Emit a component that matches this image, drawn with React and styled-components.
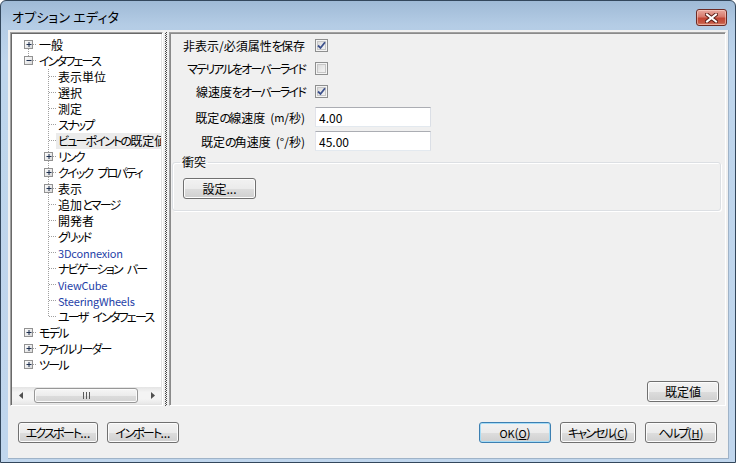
import styled, { createGlobalStyle } from 'styled-components'

const GlobalStyle = createGlobalStyle`
    html, body {
        margin: 0;
        padding: 0;
        background: #ffffff;
    }

    body {
        font-family: "Noto Sans CJK JP", "Noto Sans", sans-serif;
        font-size: 12px;
        font-feature-settings: "palt";
        color: #000;
    }

    * {
        box-sizing: border-box;
    }
`

const Window = styled.div`
    width: 736px;
    height: 463px;
    display: flex;
    flex-direction: column;
    border: 1px solid #33475c;
    border-radius: 6px 6px 0 0;
    background: linear-gradient(180deg, #9fbad6 0px, #b4cce5 24px, #bed5ec 60px, #c0d6ed 100%);
    overflow: hidden;
`

const TitleBar = styled.div`
    height: 29px;
    flex: none;
    display: flex;
    align-items: flex-start;
    justify-content: space-between;
    padding: 0 8px 0 11px;

    & > span {
        font-size: 13px;
        line-height: 15px;
        margin-top: 8px;
        letter-spacing: 0.2px;
    }
`

const CloseButton = styled.div`
    width: 31px;
    height: 17px;
    margin-top: 8px;
    border: 1px solid #6e2b24;
    border-radius: 3px;
    background: linear-gradient(180deg, #e9a99f 0%, #d77a6d 45%, #c24635 55%, #c65844 85%, #d98b74 100%);
    box-shadow: inset 0 0 0 1px rgba(255, 220, 210, 0.5);
    display: flex;
    align-items: center;
    justify-content: center;
`

const Client = styled.div`
    flex: 1;
    display: flex;
    flex-direction: column;
    margin: 0 6px 3px 7px;
    background: #f0f0f0;
    border: 1px solid #9fb3c8;
    border-width: 0 1px 1px 0;
`

const Main = styled.div`
    height: 376px;
    display: flex;
    padding: 2px 2px 0 2px;
`

const TreePanel = styled.div`
    width: 153px;
    display: flex;
    flex-direction: column;
    background: #ffffff;
    border: 1px solid;
    border-color: #a0a0a0 #ffffff #ffffff #a0a0a0;
    box-shadow: inset 1px 1px 0 #696969, inset -1px -1px 0 #e3e3e3;
    padding: 1px;
`

const TreeList = styled.div`
    flex: 1;
    overflow: hidden;
    padding-top: 3px;
`

const TreeRow = styled.div`
    height: 16px;
    display: flex;
    align-items: center;
    white-space: nowrap;

    & > svg {
        flex: none;
    }
`

const TreeLabel = styled.span`
    padding: 0 2px;
    line-height: 16px;
    height: 16px;
    flex: ${p => (p.$selected ? '1' : 'none')};
    background: ${p => (p.$selected ? '#ebebeb' : 'transparent')};
    color: ${p => (p.$blue ? '#1f3fa8' : '#000')};
`

// MS UI Gothic has narrow kana and latin; squeeze those runs
const Kana = styled.span`
    letter-spacing: -1.8px;
`

const Latin = styled.span`
    font-size: 11px;
    letter-spacing: -0.2px;
`

const Gap = styled.span`
    display: inline-block;
    width: 5px;
`

const Scrollbar = styled.div`
    height: 17px;
    flex: none;
    display: flex;
    align-items: center;
    background: linear-gradient(180deg, #e4e4e4, #f4f4f4 30%, #f4f4f4 70%, #e8e8e8);
`

const ScrollArrow = styled.div`
    width: 17px;
    height: 17px;
    display: flex;
    align-items: center;
    justify-content: center;
`

const ScrollTrack = styled.div`
    flex: 1;
    height: 17px;
    display: flex;
    align-items: center;
`

const ScrollThumb = styled.div`
    width: 104px;
    height: 15px;
    margin-left: ${p => p.$offset}px;
    border: 1px solid #979797;
    border-radius: 3px;
    background: linear-gradient(180deg, #f6f6f6 0%, #ececec 50%, #dcdcdc 51%, #d4d4d4 100%);
    box-shadow: inset 0 0 0 1px #fbfbfb;
    display: flex;
    align-items: center;
    justify-content: center;
`

const Splitter = styled.div`
    width: 2px;
    margin: 0 2px;
    background-image: repeating-conic-gradient(#4a4a4a 0% 25%, #f0f0f0 0% 50%);
    background-size: 2px 2px;
`

const RightPanel = styled.div`
    flex: 1;
    display: flex;
    flex-direction: column;
    border: 1px solid;
    border-color: #a0a0a0 #ffffff #ffffff #a0a0a0;
    box-shadow: inset 1px 1px 0 #8a8a8a;
    padding: 1px 4px 3px 2px;
`

const Form = styled.div`
    display: grid;
    grid-template-columns: 133px auto;
    column-gap: 10px;
    align-items: center;
`

const FormLabel = styled.div`
    height: ${p => p.$h}px;
    margin-top: ${p => p.$top || 0}px;
    display: flex;
    align-items: center;
    justify-content: flex-end;
    white-space: nowrap;
`

const FormCell = styled.div`
    height: ${p => p.$h}px;
    margin-top: ${p => p.$top || 0}px;
    display: flex;
    align-items: center;
`

const Box = styled.span`
    width: 13px;
    height: 13px;
    border: 1px solid #8e8f8f;
    background: linear-gradient(135deg, #d5d5d5 0%, #ececec 60%, #f6f6f6 100%);
    box-shadow: inset 0 0 0 1px #f4f4f4, inset 0 0 0 2px #c7c7c7;
    display: flex;
    align-items: center;
    justify-content: center;
`

const TextInput = styled.input`
    width: 116px;
    height: 20px;
    border: 1px solid;
    border-color: #abadb3 #dbdfe6 #e3e9ef #e2e3ea;
    background: #ffffff;
    padding: 0 3px;
    font: inherit;
    font-size: 12px;
    color: #000;
    outline: none;
`

const Group = styled.fieldset`
    margin: 2px 0 0 0;
    padding: 9px 8px 11px 10px;
    border: 1px solid #dcdfe3;
    border-radius: 3px;
    box-shadow: inset 1px 1px 0 #ffffff, 1px 1px 0 #ffffff;

    & > legend {
        padding: 0 2px;
        margin-left: -3px;
        line-height: 14px;
    }
`

const Button = styled.button`
    width: ${p => p.$w || 72}px;
    height: 21px;
    padding: 0;
    font: inherit;
    font-size: 12px;
    line-height: 17px;
    color: #000;
    white-space: nowrap;
    border: 1px solid ${p => (p.$default ? '#3c7fb1' : '#707070')};
    border-radius: 3px;
    background: linear-gradient(180deg, #f2f2f2 0%, #ebebeb 50%, #dddddd 51%, #cfcfcf 100%);
    box-shadow: inset 0 0 0 1px ${p => (p.$default ? '#a6dcf6' : '#fcfcfc')};

    & u {
        text-underline-offset: 1px;
    }
`

const PanelFooter = styled.div`
    margin-top: auto;
    display: flex;
    justify-content: flex-end;
    padding-right: 2px;
`

const BottomBar = styled.div`
    flex: 1;
    display: flex;
    justify-content: space-between;
    align-items: flex-start;
    padding: 16px 11px 0 10px;
`

const ButtonGroup = styled.div`
    display: flex;
    gap: ${p => p.$gap || 9}px;
`

function Jp({ text }) {
    const parts = text.split(/([\u3040-\u30FF]+|[A-Za-z0-9]+| )/)
    return parts.map((p, i) => {
        if (!p) return null
        if (p === ' ') return <Gap key={i} />
        if (/[\u3040-\u30FF]/.test(p)) return <Kana key={i}>{p}</Kana>
        if (/[A-Za-z0-9]/.test(p)) return <Latin key={i}>{p}</Latin>
        return p
    })
}

const treeItems = [
    { label: '一般', level: 0, exp: 'plus', down: true },
    { label: 'インタフェース', level: 0, exp: 'minus', up: true },
    { label: '表示単位', level: 1 },
    { label: '選択', level: 1 },
    { label: '測定', level: 1 },
    { label: 'スナップ', level: 1 },
    { label: 'ビューポイントの既定値', level: 1, selected: true },
    { label: 'リンク', level: 1, exp: 'plus' },
    { label: 'クイック プロパティ', level: 1, exp: 'plus' },
    { label: '表示', level: 1, exp: 'plus' },
    { label: '追加とマージ', level: 1 },
    { label: '開発者', level: 1 },
    { label: 'グリッド', level: 1 },
    { label: '3Dconnexion', level: 1, blue: true },
    { label: 'ナビゲーション バー', level: 1 },
    { label: 'ViewCube', level: 1, blue: true },
    { label: 'SteeringWheels', level: 1, blue: true },
    { label: 'ユーザ インタフェース', level: 1, last: true },
    { label: 'モデル', level: 0, exp: 'plus' },
    { label: 'ファイルリーダー', level: 0, exp: 'plus' },
    { label: 'ツール', level: 0, exp: 'plus' },
]

const DOT = { stroke: '#a0a0a0', strokeWidth: 1, strokeDasharray: '1 1' }

// expander box centred on cx
function Expander({ cx, type }) {
    return (
        <g>
            <defs>
                <linearGradient id="expg" x1="0" y1="0" x2="1" y2="1">
                    <stop offset="0" stopColor="#ffffff" />
                    <stop offset="1" stopColor="#d9d9d9" />
                </linearGradient>
            </defs>
            <rect x={cx - 4} y={3.5} width={8} height={8} fill="url(#expg)" stroke="#929292" />
            <line x1={cx - 2} y1={7.5} x2={cx + 3} y2={7.5} stroke="#1d2f4f" />
            {type === 'plus' && <line x1={cx + 0.5} y1={5} x2={cx + 0.5} y2={10} stroke="#1d2f4f" />}
        </g>
    )
}

function Connector({ item }) {
    if (item.level === 0) {
        const cx = 16.5
        return (
            <svg width="25" height="16">
                {item.down && <line x1={cx} y1={12} x2={cx} y2={16} {...DOT} />}
                {item.up && <line x1={cx} y1={0} x2={cx} y2={4} {...DOT} />}
                <line x1={21} y1={7.5} x2={25} y2={7.5} {...DOT} />
                <Expander cx={cx} type={item.exp} />
            </svg>
        )
    }
    const cx = 36.5
    return (
        <svg width="44" height="16">
            <line x1={cx} y1={0} x2={cx} y2={item.last ? 8 : 16} {...DOT} />
            <line x1={item.exp ? 41 : 37} y1={7.5} x2={44} y2={7.5} {...DOT} />
            {item.exp && <Expander cx={cx} type={item.exp} />}
        </svg>
    )
}

function Check({ checked }) {
    return (
        <Box>
            {checked && (
                <svg width="9" height="9" viewBox="0 0 9 9">
                    <path d="M1 4.5 L3.5 7 L8 1.2" fill="none" stroke="#3d518c" strokeWidth="1.8" />
                </svg>
            )}
        </Box>
    )
}

function App() {
    return (
        <Window>
            <GlobalStyle />
            <TitleBar>
                <span>オプション エディタ</span>
                <CloseButton>
                    <svg width="13" height="10" viewBox="0 0 13 10">
                        <path d="M2 1.5 L11 8.5 M11 1.5 L2 8.5" stroke="#5a1d16" strokeWidth="4" strokeLinecap="square" />
                        <path d="M2 1.5 L11 8.5 M11 1.5 L2 8.5" stroke="#ffffff" strokeWidth="2" strokeLinecap="square" />
                    </svg>
                </CloseButton>
            </TitleBar>

            <Client>
                <Main>
                    <TreePanel>
                        <TreeList>
                            {treeItems.map(item => (
                                <TreeRow key={item.label}>
                                    <Connector item={item} />
                                    <TreeLabel $selected={item.selected} $blue={item.blue}>
                                        <Jp text={item.label} />
                                    </TreeLabel>
                                </TreeRow>
                            ))}
                        </TreeList>
                        <Scrollbar>
                            <ScrollArrow>
                                <svg width="4" height="7"><polygon points="4,0 0,3.5 4,7" fill="#505050" /></svg>
                            </ScrollArrow>
                            <ScrollTrack>
                                <ScrollThumb $offset={5}>
                                    <svg width="7" height="7">
                                        <path d="M0.5 0 V7 M3.5 0 V7 M6.5 0 V7" stroke="#5a5a5a" />
                                    </svg>
                                </ScrollThumb>
                            </ScrollTrack>
                            <ScrollArrow>
                                <svg width="4" height="7"><polygon points="0,0 4,3.5 0,7" fill="#505050" /></svg>
                            </ScrollArrow>
                        </Scrollbar>
                    </TreePanel>

                    <Splitter />

                    <RightPanel>
                        <Form>
                            <FormLabel $h={23}><Jp text="非表示/必須属性を保存" /></FormLabel>
                            <FormCell $h={23}><Check checked /></FormCell>

                            <FormLabel $h={23}><Jp text="マテリアルをオーバーライド" /></FormLabel>
                            <FormCell $h={23}><Check /></FormCell>

                            <FormLabel $h={23}><Jp text="線速度をオーバーライド" /></FormLabel>
                            <FormCell $h={23}><Check checked /></FormCell>

                            <FormLabel $h={24} $top={2}><Jp text="既定の線速度 (m/秒)" /></FormLabel>
                            <FormCell $h={24} $top={2}><TextInput defaultValue="4.00" /></FormCell>

                            <FormLabel $h={24}><Jp text="既定の角速度 (°/秒)" /></FormLabel>
                            <FormCell $h={24}><TextInput defaultValue="45.00" /></FormCell>
                        </Form>

                        <Group>
                            <legend>衝突</legend>
                            <Button $w={73}>設定...</Button>
                        </Group>

                        <PanelFooter>
                            <Button>既定値</Button>
                        </PanelFooter>
                    </RightPanel>
                </Main>

                <BottomBar>
                    <ButtonGroup>
                        <Button $w={80}><Jp text="エクスポート" />...</Button>
                        <Button $w={72}><Jp text="インポート" />...</Button>
                    </ButtonGroup>
                    <ButtonGroup>
                        <Button $default><Latin>OK</Latin>(<u><Latin>O</Latin></u>)</Button>
                        <Button $w={76}><Jp text="キャンセル" />(<u><Latin>C</Latin></u>)</Button>
                        <Button><Jp text="ヘルプ" />(<u><Latin>H</Latin></u>)</Button>
                    </ButtonGroup>
                </BottomBar>
            </Client>
        </Window>
    )
}

export default App
